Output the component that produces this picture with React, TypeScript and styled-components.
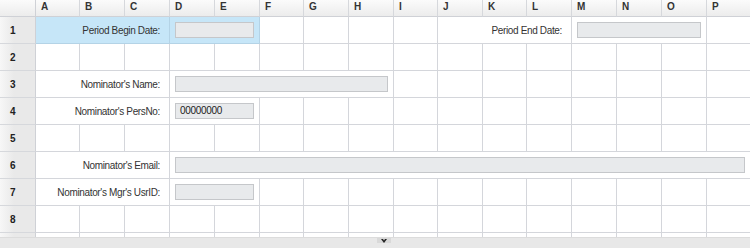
import React from "react";
import styled, { createGlobalStyle } from "styled-components";

const Global = createGlobalStyle`
  html, body { margin: 0; padding: 0; background: #ffffff; }
  body { font-family: "Liberation Sans", Arial, sans-serif; }
`;

const COLS = [36, 44, 45, 45, 45, 45, 44, 45, 45, 44, 45, 44, 45, 45, 45, 45, 44];
const LETTERS = "ABCDEFGHIJKLMNOP".split("");

const Frame = styled.div`
  width: 750px;
  height: 248px;
  display: flex;
  flex-direction: column;
  overflow: hidden;
`;

const Viewport = styled.div`
  flex: 1;
  overflow: hidden;
`;

const Grid = styled.div`
  display: grid;
  grid-template-columns: ${COLS.map((c) => `${c}px`).join(" ")};
  grid-template-rows: 17px repeat(9, 27px);
  width: max-content;
`;

const Corner = styled.div`
  background: linear-gradient(#fbfbfb, #ececec);
  border-right: 1px solid #cfd1d6;
  border-bottom: 1px solid #cfd1d6;
`;

const ColHead = styled.div`
  background: linear-gradient(#fbfbfb, #ececec);
  border-right: 1px solid #d6d8dc;
  border-bottom: 1px solid #cfd1d6;
  font-size: 10px;
  font-weight: bold;
  color: #333;
  padding-left: 5px;
  line-height: 14px;
`;

const RowHead = styled.div`
  background: linear-gradient(to right, #f7f7f7, #e9e9e9 40%, #e9e9e9);
  border-right: 1px solid #cfd1d6;
  border-bottom: 1px solid #d6d8dc;
  font-size: 10px;
  font-weight: bold;
  color: #222;
  padding-left: 10px;
  display: flex;
  align-items: center;
`;

const Cell = styled.div<{ $span?: number; $sel?: boolean }>`
  grid-column: span ${(p) => p.$span ?? 1};
  background: ${(p) => (p.$sel ? "#c6e6f8" : "#ffffff")};
  border-right: 1px solid ${(p) => (p.$sel ? "#b4d3e6" : "#d4d6db")};
  border-bottom: 1px solid ${(p) => (p.$sel ? "#b4d3e6" : "#d4d6db")};
  display: flex;
  align-items: center;
  min-width: 0;
`;

const Label = styled(Cell)`
  justify-content: flex-end;
  padding-right: 9px;
  font-size: 10px;
  letter-spacing: -0.35px;
  color: #333;
  white-space: nowrap;
`;

const Field = styled.div`
  box-sizing: border-box;
  margin: 0 5px;
  flex: 1;
  height: 16px;
  background: #e8eaec;
  border: 1px solid #c5c7ca;
  font-size: 10px;
  letter-spacing: -0.3px;
  color: #222;
  padding-left: 4px;
  line-height: 14px;
`;

const ScrollBar = styled.div`
  height: 10px;
  background: #e8e8e8;
  border-top: 1px solid #dcdcdc;
  position: relative;
`;

const Toggle = styled.div`
  position: absolute;
  left: 377px;
  top: 0;
  width: 14px;
  height: 5px;
  background: #d9d9d9;
  display: flex;
  justify-content: center;
  align-items: center;
`;

type RowDef = React.ReactNode[];

const blanks = (n: number) =>
  Array.from({ length: n }, (_, i) => <Cell key={`b${i}`} />);

export default function App() {
  const rows: { n: string; cells: RowDef }[] = [
    {
      n: "1",
      cells: [
        <Label key="l" $span={3} $sel>Period Begin Date:</Label>,
        <Cell key="f" $span={2} $sel><Field /></Cell>,
        ...blanks(4),
        <Label key="l2" $span={3}>Period End Date:</Label>,
        <Cell key="f2" $span={3}><Field /></Cell>,
        <Cell key="p" />,
      ],
    },
    { n: "2", cells: blanks(16) },
    {
      n: "3",
      cells: [
        <Label key="l" $span={3}>Nominator's Name:</Label>,
        <Cell key="f" $span={5}><Field /></Cell>,
        ...blanks(8),
      ],
    },
    {
      n: "4",
      cells: [
        <Label key="l" $span={3}>Nominator's PersNo:</Label>,
        <Cell key="f" $span={2}><Field>00000000</Field></Cell>,
        ...blanks(11),
      ],
    },
    { n: "5", cells: blanks(16) },
    {
      n: "6",
      cells: [
        <Label key="l" $span={3}>Nominator's Email:</Label>,
        <Cell key="f" $span={13}><Field /></Cell>,
      ],
    },
    {
      n: "7",
      cells: [
        <Label key="l" $span={3}>Nominator's Mgr's UsrID:</Label>,
        <Cell key="f" $span={2}><Field /></Cell>,
        ...blanks(11),
      ],
    },
    { n: "8", cells: blanks(16) },
    { n: "", cells: blanks(16) },
  ];

  return (
    <>
      <Global />
      <Frame>
        <Viewport>
          <Grid>
            <Corner />
            {LETTERS.map((l) => (
              <ColHead key={l}>{l}</ColHead>
            ))}
            {rows.map((r, i) => (
              <React.Fragment key={i}>
                <RowHead>{r.n}</RowHead>
                {r.cells}
              </React.Fragment>
            ))}
          </Grid>
        </Viewport>
        <ScrollBar>
          <Toggle>
            <svg width="6" height="4" viewBox="0 0 6 4">
              <path d="M0 0 L2 0 L3 1.5 L4 0 L6 0 L3 4 Z" fill="#222" />
            </svg>
          </Toggle>
        </ScrollBar>
      </Frame>
    </>
  );
}
